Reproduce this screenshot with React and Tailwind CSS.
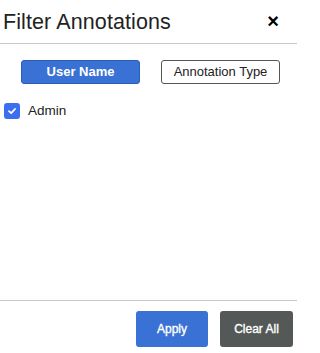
import React from "react";

export default function App() {
  return (
    <div className="w-[297px] h-[353px] flex flex-col bg-white text-[#222] font-['Liberation_Sans',Arial,sans-serif] overflow-hidden">
      <div className="h-[44px] shrink-0 border-b border-[#c8c8c8] flex items-center justify-between pl-[3px] pr-[18px]">
        <h1 className="text-[21.5px] leading-none tracking-[0.1px] pt-[2px]">Filter Annotations</h1>
        <button className="text-[20px] font-bold leading-none text-black pb-[1px]">×</button>
      </div>
      <div className="flex-1 flex flex-col">
        <div className="flex gap-[21px] pl-[21px] pt-[16px]">
          <button className="w-[119px] h-[24px] rounded-[3px] bg-[#3a71d4] border border-[#2d5fb8] text-white text-[13px] font-bold">
            User Name
          </button>
          <button className="w-[119px] h-[24px] rounded-[3px] bg-white border border-[#555] text-[#222] text-[13px]">
            Annotation Type
          </button>
        </div>
        <label className="flex items-center gap-[8px] pl-[4px] mt-[17px]">
          <span className="w-[16px] h-[16px] rounded-[3px] bg-[#3b6ff0] flex items-center justify-center">
            <svg width="10" height="10" viewBox="0 0 10 10">
              <path d="M2 5.2 L4.2 7.2 L8 3" stroke="white" strokeWidth="1.8" fill="none" strokeLinecap="round" strokeLinejoin="round" />
            </svg>
          </span>
          <span className="text-[13.5px]">Admin</span>
        </label>
      </div>
      <div className="h-[53px] shrink-0 border-t border-[#c8c8c8] flex justify-end items-start gap-[12px] pr-[4px] pt-[10px]">
        <button className="w-[72px] h-[36px] rounded-[3px] bg-[#3a71d4] text-white text-[12px] [-webkit-text-stroke:0.35px_white]">
          Apply
        </button>
        <button className="w-[73px] h-[36px] rounded-[3px] bg-[#545957] text-white text-[12px] [-webkit-text-stroke:0.35px_white]">
          Clear All
        </button>
      </div>
    </div>
  );
}
